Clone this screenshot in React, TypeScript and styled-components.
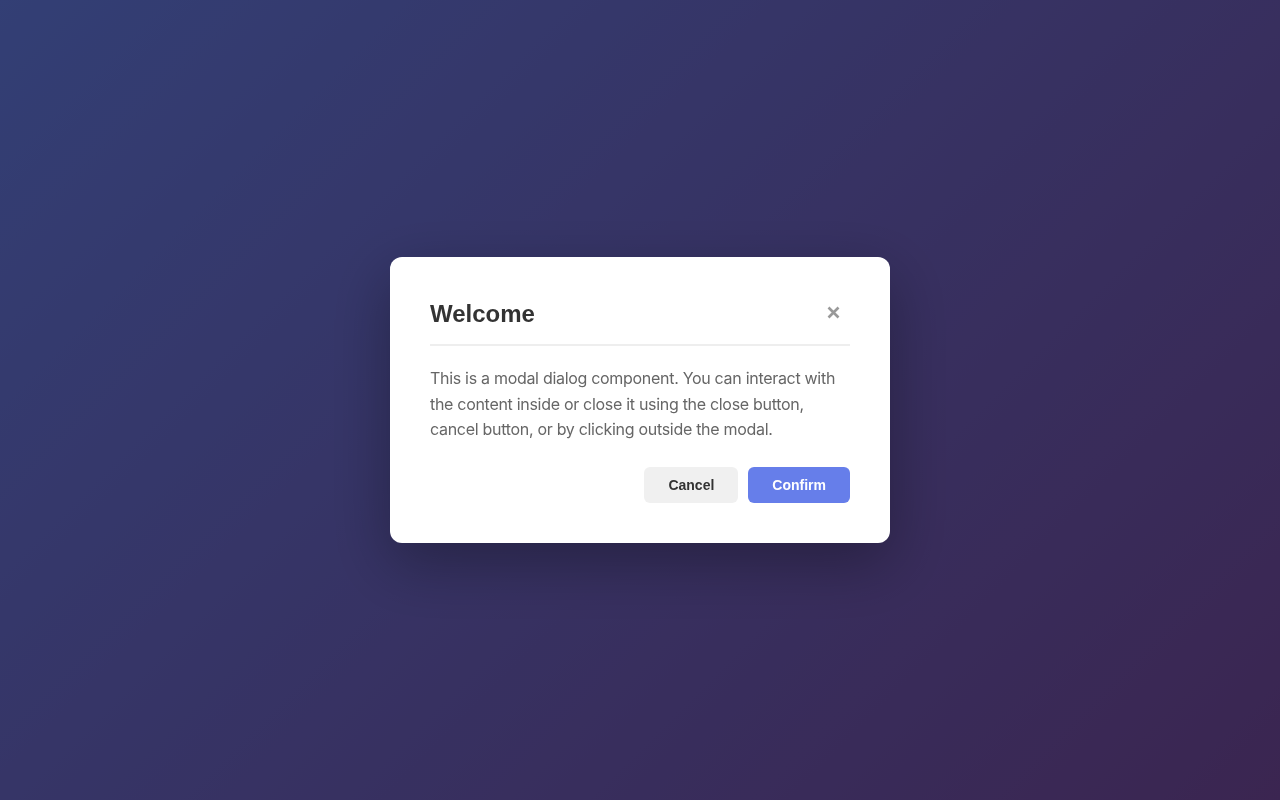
import React from 'react';
import styled, { createGlobalStyle } from 'styled-components';

const GlobalStyle = createGlobalStyle`
  html, body {
    margin: 0;
    padding: 0;
    height: 100%;
  }
  body {
    font-family: Inter, 'Liberation Sans', sans-serif;
    background: linear-gradient(135deg, #667eea 0%, #764ba2 100%);
  }
  #root {
    height: 100%;
  }
`;

const Overlay = styled.div`
  position: fixed;
  inset: 0;
  background: rgba(0, 0, 0, 0.5);
  display: flex;
  align-items: center;
  justify-content: center;
`;

const ModalBox = styled.div`
  width: 500px;
  box-sizing: border-box;
  padding: 40px;
  background: #fff;
  border-radius: 12px;
  box-shadow: 0 20px 60px rgba(0, 0, 0, 0.3);
`;

const Header = styled.div`
  display: flex;
  align-items: center;
  justify-content: space-between;
  padding: 3px 0 16px;
  border-bottom: 2px solid #eee;
  margin-bottom: 20px;
`;

const Title = styled.h2`
  margin: 0;
  font-family: 'Liberation Sans', Arial, sans-serif;
  font-size: 24px;
  font-weight: 700;
  color: #333;
`;

const CloseButton = styled.button`
  border: none;
  background: none;
  padding: 0;
  width: 30px;
  height: 30px;
  display: flex;
  align-items: center;
  justify-content: center;
  color: #999;
  cursor: pointer;
  margin: -3px 2px 0 0;
`;

const Body = styled.p`
  margin: 0 0 24px;
  font-size: 16px;
  line-height: 1.6;
  letter-spacing: -0.3px;
  color: #666;
`;

const Footer = styled.div`
  display: flex;
  justify-content: flex-end;
  gap: 10px;
`;

const Button = styled.button<{ $primary?: boolean }>`
  border: none;
  border-radius: 6px;
  padding: 10px 24px;
  font-family: 'Liberation Sans', Arial, sans-serif;
  font-size: 14px;
  font-weight: 700;
  line-height: 16px;
  cursor: pointer;
  background: ${(p) => (p.$primary ? '#667eea' : '#f0f0f0')};
  color: ${(p) => (p.$primary ? '#fff' : '#333')};
`;

const CloseIcon = () => (
  <svg width="13" height="13" viewBox="0 0 13 13" fill="none">
    <path
      d="M1.5 1.5L11.5 11.5M11.5 1.5L1.5 11.5"
      stroke="currentColor"
      strokeWidth="2.6"
      strokeLinecap="butt"
    />
  </svg>
);

const App = () => (
  <>
    <GlobalStyle />
    <Overlay>
      <ModalBox>
        <Header>
          <Title>Welcome</Title>
          <CloseButton aria-label="Close">
            <CloseIcon />
          </CloseButton>
        </Header>
        <Body>
          This is a modal dialog component. You can interact with the content
          inside or close it using the close button, cancel button, or by
          clicking outside the modal.
        </Body>
        <Footer>
          <Button>Cancel</Button>
          <Button $primary>Confirm</Button>
        </Footer>
      </ModalBox>
    </Overlay>
  </>
);

export default App;
